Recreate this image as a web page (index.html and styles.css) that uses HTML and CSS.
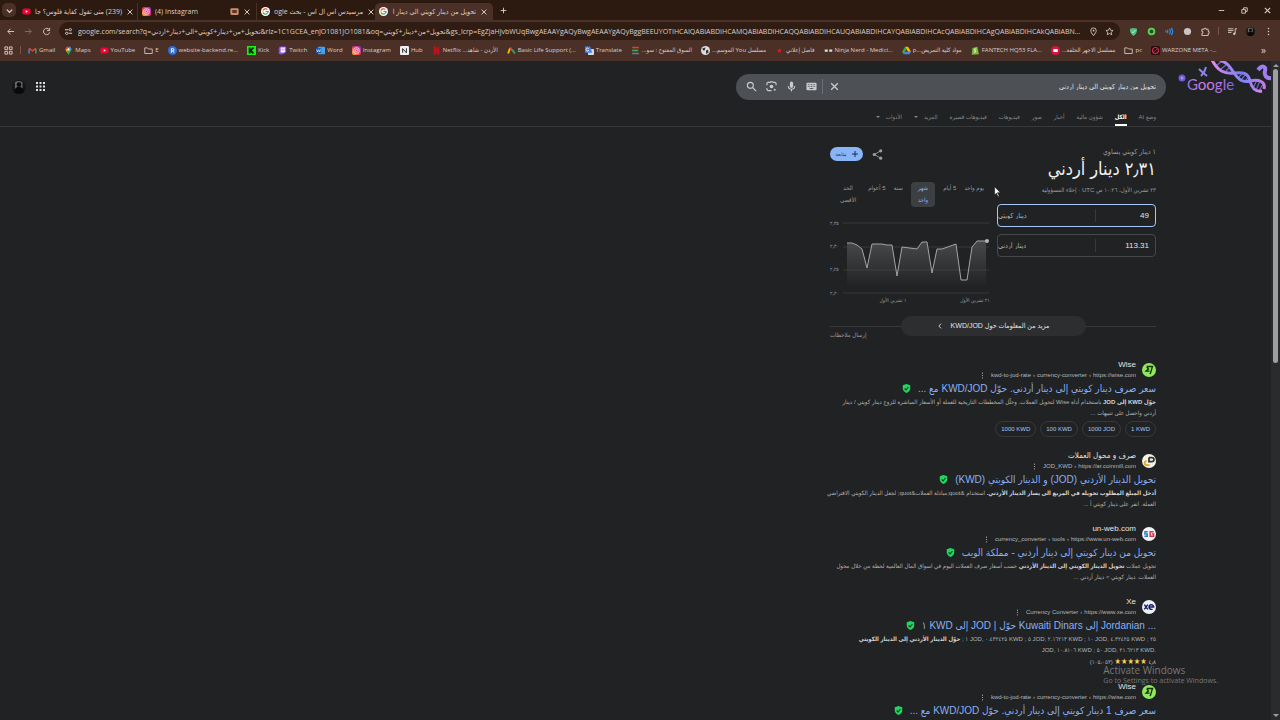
FILE: index.html
```html
<!DOCTYPE html>
<html lang="ar">
<head>
    <meta charset="UTF-8">
    <meta name="viewport" content="width=device-width, initial-scale=1.0">
    <title>تحويل من دينار كويتي الى دينار اردني - بحث Google</title>
    <link rel="stylesheet" href="styles.css">
</head>
<body>
    <svg class="sprite" aria-hidden="true">
        <symbol id="i-close" viewBox="0 0 10 10"><path d="M2 2l6 6M8 2l-6 6" fill="none" stroke="currentColor" stroke-width="1.2"/></symbol>
        <symbol id="i-youtube" viewBox="0 0 24 24"><rect x="1" y="4" width="22" height="16" rx="5" fill="#f00033"/><path d="M10 8.500l6 3.500-6 3.500z" fill="#fff"/></symbol>
        <symbol id="i-instagram" viewBox="0 0 24 24"><rect width="24" height="24" rx="6" fill="url(#insta)"/><rect x="5" y="5" width="14" height="14" rx="4" fill="none" stroke="#fff" stroke-width="2"/><circle cx="12" cy="12" r="3.200" fill="none" stroke="#fff" stroke-width="2"/><circle cx="16" cy="8" r="1" fill="#fff"/></symbol>
        <symbol id="i-google" viewBox="0 0 24 24"><circle cx="12" cy="12" r="12" fill="#fff"/><path d="M17 7a7 7 0 0 0-11.500 2" fill="none" stroke="#ea4335" stroke-width="3"/><path d="M5.500 9a7 7 0 0 0 0 6" fill="none" stroke="#fbbc05" stroke-width="3"/><path d="M5.500 15a7 7 0 0 0 11 2" fill="none" stroke="#34a853" stroke-width="3"/><path d="M16.500 17a7 7 0 0 0 2.500-5h-7" fill="none" stroke="#4285f4" stroke-width="3"/></symbol>
        <symbol id="i-folder" viewBox="0 0 24 24"><path d="M2 5h7l3 3h10v12H2z" fill="none" stroke="currentColor" stroke-width="2.200" stroke-linejoin="round"/></symbol>
        <symbol id="i-check" viewBox="0 0 24 24"><path d="M12 0l10 3v9c0 6-5 10-10 12-5-2-10-6-10-12V3z" fill="#1fd760"/><path d="M7 12l4 4 6-8" fill="none" stroke="#15301e" stroke-width="3"/></symbol>
        <symbol id="i-wise" viewBox="0 0 24 24"><circle cx="12" cy="12" r="12" fill="#8fe85e"/><path d="M8 6h10l-4 13M8 6l3 4-4 4h6" fill="none" stroke="#163300" stroke-width="2.400"/></symbol>
        <symbol id="i-dots" viewBox="0 0 4 12"><circle cx="2" cy="2" r="1"/><circle cx="2" cy="6" r="1"/><circle cx="2" cy="10" r="1"/></symbol>
        <symbol id="i-avatar" viewBox="0 0 24 24"><circle cx="12" cy="12" r="12" fill="#151617"/><path d="M5 4q6-5 13 0v12H5z" fill="#66686a"/><circle cx="12" cy="8" r="4" fill="#0a0a0b"/><path d="M4 22c0-7 2-10 8-10s9 4 8 9q-8 5-16 1z" fill="#0a0a0b"/></symbol>
        <linearGradient id="insta" x1="0" y1="1" x2="1" y2="0"><stop offset="0" stop-color="#fdc02f"/><stop offset="0.500" stop-color="#f0306b"/><stop offset="1" stop-color="#8a3ac8"/></linearGradient>
    </svg>

    <!-- Browser window -->
    <header class="browser" dir="ltr">
        <div class="tab-strip">
            <button class="tab-search" aria-label="Search tabs"><svg viewBox="0 0 10 10"><path d="M2 4l3 3 3-3" fill="none" stroke="currentColor" stroke-width="1.400"/></svg></button>
            <div class="tab">
                <svg class="fav"><use href="#i-youtube"/></svg>
                <span class="tab-title" dir="rtl">(239) متى تقول كفاية فلوس؟ جا</span>
                <button class="tab-close" aria-label="Close"><svg><use href="#i-close"/></svg></button>
            </div>
            <div class="tab divided">
                <svg class="fav"><use href="#i-instagram"/></svg>
                <span class="tab-title">(4) Instagram</span>
                <svg class="fav" viewBox="0 0 24 24"><rect x="1" y="3" width="22" height="18" rx="3" fill="#c98f68"/><rect x="6" y="8" width="12" height="8" fill="#5b3526"/></svg>
                <button class="tab-close" aria-label="Close"><svg><use href="#i-close"/></svg></button>
            </div>
            <div class="tab divided">
                <svg class="fav"><use href="#i-google"/></svg>
                <span class="tab-title" dir="rtl">مرسيدس اس ال اس - بحث ogle</span>
                <button class="tab-close" aria-label="Close"><svg><use href="#i-close"/></svg></button>
            </div>
            <div class="tab active">
                <svg class="fav"><use href="#i-google"/></svg>
                <span class="tab-title" dir="rtl">تحويل من دينار كويتي الى دينار ا</span>
                <button class="tab-close" aria-label="Close"><svg><use href="#i-close"/></svg></button>
            </div>
            <button class="new-tab" aria-label="New tab"><svg viewBox="0 0 10 10"><path d="M5 1v8M1 5h8" stroke="currentColor" stroke-width="1.300"/></svg></button>
            <div class="window-buttons">
                <button aria-label="Minimize"><svg viewBox="0 0 10 10"><path d="M2 5h6" stroke="currentColor"/></svg></button>
                <button aria-label="Restore"><svg viewBox="0 0 10 10"><path d="M2 4h4v4H2zM4 4V2h4v4H6" fill="none" stroke="currentColor"/></svg></button>
                <button aria-label="Close window"><svg><use href="#i-close"/></svg></button>
            </div>
        </div>

        <div class="toolbar">
            <button class="nav-btn" aria-label="Back"><svg viewBox="0 0 10 10"><path d="M9 5H2M5 2L2 5l3 3" fill="none" stroke="currentColor"/></svg></button>
            <button class="nav-btn off" aria-label="Forward"><svg viewBox="0 0 10 10"><path d="M1 5h7M5 2l3 3-3 3" fill="none" stroke="currentColor"/></svg></button>
            <button class="nav-btn" aria-label="Reload"><svg viewBox="0 0 10 10"><path d="M8 3a3.500 3.500 0 1 0 .5 3M8.500 1v3h-3" fill="none" stroke="currentColor"/></svg></button>
            <div class="address">
                <button class="site-info" aria-label="Site information"><svg viewBox="0 0 10 10"><path d="M1 3h4M5 7h4" stroke="currentColor" stroke-width="1.200"/><circle cx="7" cy="3" r="1.300" fill="none" stroke="currentColor"/><circle cx="3" cy="7" r="1.300" fill="none" stroke="currentColor"/></svg></button>
                <input type="text" aria-label="Address" value="google.com/search?q=تحويل+من+دينار+كويتي+الى+دينار+اردني&amp;rlz=1C1GCEA_enJO1081JO1081&amp;oq=تحويل+من+دينار+كويتي&amp;gs_lcrp=EgZjaHJvbWUqBwgAEAAYgAQyBwgAEAAYgAQyBggBEEUYOTIHCAIQABiABDIHCAMQABiABDIHCAQQABiABDIHCAUQABiABDIHCAYQABiABDIHCAcQABiABDIHCAgQABiABDIHCAkQABiABNIBCDExNjhqMGo3qAIAsAIA">
                <button aria-label="Location"><svg viewBox="0 0 10 10"><path d="M5 9.500C3 7 2 5.500 2 4a3 3 0 0 1 6 0c0 1.500-1 3-3 5.500z" fill="none" stroke="currentColor"/><circle cx="5" cy="4" r="1" fill="currentColor"/></svg></button>
                <button aria-label="Bookmark"><svg viewBox="0 0 10 10"><path d="M5 1l1.200 2.600 2.800.3-2.100 1.900.6 2.800L5 7.200 2.500 8.600l.6-2.800L1 3.900l2.800-.3z" fill="none" stroke="currentColor" stroke-width=".9"/></svg></button>
            </div>
            <button class="ext" aria-label="Shield"><svg viewBox="0 0 10 10"><path d="M5 1l4 1c0 4-1 6-4 8-3-2-4-4-4-8z" fill="#4fc07e"/><path d="M3 5l1.500 1.500L7 3.500" stroke="#d8f6e2" fill="none"/></svg></button>
            <button class="ext" aria-label="Extension"><svg viewBox="0 0 10 10"><circle cx="5" cy="5" r="3.200" fill="#1d5a22" stroke="#5ed45a" stroke-width="2"/></svg></button>
            <button class="ext" aria-label="Sound"><svg viewBox="0 0 10 10"><path d="M1 4v2M3 3v4M5 2q2 3 0 6M7 1q3 4 0 8" fill="none" stroke="#2d8ff0" stroke-width="1.300"/></svg></button>
            <button class="ext" aria-label="Extension"><svg viewBox="0 0 10 10"><circle cx="5" cy="5" r="4" fill="#c9c5c2"/></svg></button>
            <button class="ext" aria-label="Extensions"><svg viewBox="0 0 10 10"><path d="M1 2.500h2.500V1.500h2v1H8V5h1v2H8v2.500H1V7h1V5H1z" fill="none" stroke="currentColor"/></svg></button>
            <span class="bar-line"></span>
            <button class="ext" aria-label="Media"><svg viewBox="0 0 10 10"><path d="M0 2h6M0 4h6M0 6h4M8 7V2h2" fill="none" stroke="currentColor"/><circle cx="7" cy="7.500" r="1.300" fill="currentColor"/></svg></button>
            <button class="ext" aria-label="Profile"><svg class="profile"><use href="#i-avatar"/></svg></button>
            <button class="ext" aria-label="Menu"><svg fill="currentColor"><use href="#i-dots"/></svg></button>
        </div>

        <nav class="bookmarks">
            <button class="apps" aria-label="Apps"><svg class="fav" viewBox="0 0 10 10"><path d="M1 1h3v3H1zM6 1h3v3H6zM1 6h3v3H1zM6 6h3v3H6z" fill="none" stroke="currentColor"/></svg></button>
            <span class="bar-line"></span>
            <a href="#"><svg class="fav" viewBox="0 0 24 24"><path d="M3 20V7" stroke="#4285f4" stroke-width="4"/><path d="M3 6l9 7 9-7" fill="none" stroke="#ea4335" stroke-width="4"/><path d="M21 7v13" stroke="#34a853" stroke-width="4"/></svg><span>Gmail</span></a>
            <a href="#"><svg class="fav" viewBox="0 0 24 24"><path d="M12 24C7 16 4 13 4 8h16c0 5-3 8-8 16z" fill="#34a853"/><path d="M4 9a8 8 0 0 1 8-8v8z" fill="#ea4335"/><path d="M12 1a8 8 0 0 1 8 8h-8z" fill="#4285f4"/><path d="M4 9h8l-5 6z" fill="#fbbc05"/><circle cx="12" cy="9" r="3" fill="#fff"/></svg><span>Maps</span></a>
            <a href="#"><svg class="fav"><use href="#i-youtube"/></svg><span>YouTube</span></a>
            <a href="#"><svg class="fav"><use href="#i-folder"/></svg><span>E</span></a>
            <a href="#"><svg class="fav" viewBox="0 0 24 24"><circle cx="12" cy="12" r="12" fill="#2f6fdb"/><path d="M9 18V7h4a3 3 0 0 1 0 6H9m4 0l3 5" fill="none" stroke="#fff" stroke-width="2.500"/></svg><span>website-backend.re...</span></a>
            <a href="#"><svg class="fav" viewBox="0 0 24 24"><rect width="24" height="24" fill="#18f018"/><path d="M7 4v16M17 4l-7 8 7 8" fill="none" stroke="#0b1a08" stroke-width="5"/></svg><span>Kick</span></a>
            <a href="#"><svg class="fav" viewBox="0 0 24 24"><path d="M5 1h17v14l-6 6h-5l-4 3v-3H2V5z" fill="#9146ff"/><path d="M7 4h12v10l-3 3H7z" fill="#fff"/><path d="M11 7v5M16 7v5" stroke="#9146ff" stroke-width="2"/></svg><span>Twitch</span></a>
            <a href="#"><svg class="fav" viewBox="0 0 24 24"><rect x="5" y="2" width="19" height="20" rx="2" fill="#41a5ee"/><rect y="6" width="14" height="13" fill="#185abd"/><path d="M2 9l2 7 3-6 3 6 2-7" fill="none" stroke="#fff" stroke-width="1.600"/></svg><span>Word</span></a>
            <a href="#"><svg class="fav"><use href="#i-instagram"/></svg><span>Instagram</span></a>
            <a href="#"><svg class="fav" viewBox="0 0 24 24"><rect width="24" height="24" rx="3" fill="#eee"/><path d="M7 18V7l10 11V6" fill="none" stroke="#222" stroke-width="2.500"/></svg><span>Hub</span></a>
            <a href="#"><svg class="fav" viewBox="0 0 24 24"><path d="M7 1v22M17 1v22M7 1l10 22" stroke="#c4101c" stroke-width="5"/></svg><span dir="rtl">الأردن - شاهد... Netflix</span></a>
            <a href="#"><svg class="fav" viewBox="0 0 24 24"><path d="M3 20L8 6" stroke="#fbbc05" stroke-width="5"/><path d="M8 4l6 8" stroke="#ea4335" stroke-width="5"/><path d="M14 10l7 10" stroke="#34a853" stroke-width="5"/></svg><span>Basic Life Support (...</span></a>
            <a href="#"><svg class="fav" viewBox="0 0 24 24"><rect x="8" y="8" width="16" height="16" rx="2" fill="#d8dade"/><path d="M0 1h14l5 17H0z" fill="#4285f4"/><path d="M10 7a4 4 0 1 0 0 5H7" fill="none" stroke="#fff" stroke-width="2"/></svg><span>Translate</span></a>
            <a href="#"><svg class="fav" viewBox="0 0 24 24"><path d="M3 4h18" stroke="#d3433d" stroke-width="4"/><path d="M3 12h16" stroke="#46b04f" stroke-width="4"/><path d="M3 20h18" stroke="#3f88c9" stroke-width="4"/></svg><span dir="rtl">السوق المفتوح : سو...</span></a>
            <a href="#"><svg class="fav" viewBox="0 0 24 24"><circle cx="12" cy="12" r="12" fill="#ddd"/><path d="M4 6l8-2-2 7-5 1zM13 12l6-2 1 7-6 4z" fill="#333"/></svg><span dir="rtl">مسلسل You الموسم...</span></a>
            <a href="#"><svg class="fav" viewBox="0 0 24 24"><path d="M12 6l2 4 4 1-3 3 1 4-4-2-4 2 1-4-3-3 4-1z" fill="#d01f2b"/></svg><span dir="rtl">فاصل إعلاني</span></a>
            <a href="#"><svg class="fav" viewBox="0 0 24 24"><path d="M2 12h8M14 12h8" stroke="#ddd" stroke-width="6"/></svg><span>Ninja Nerd - Medici...</span></a>
            <a href="#"><svg class="fav" viewBox="0 0 24 24"><path d="M8 2h8l8 13h-8z" fill="#fbbc05"/><path d="M8 2l4 7-8 13-4-7z" fill="#34a853"/><path d="M8 15h16l-4 7H4z" fill="#4285f4"/></svg><span dir="rtl">مواد كلية التمريض...p</span></a>
            <a href="#"><svg class="fav" viewBox="0 0 24 24"><path d="M4 5l13-3 4 20-19 1z" fill="#7dba3e"/><path d="M14 8c-5-1-6 3-3 4s2 5-3 4" fill="none" stroke="#fff" stroke-width="2.500"/></svg><span>FANTECH HQ53 FLA...</span></a>
            <a href="#"><svg class="fav" viewBox="0 0 24 24"><circle cx="12" cy="12" r="12" fill="#d9153f"/><rect x="6" y="8" width="12" height="8" rx="2" fill="#fff"/></svg><span dir="rtl">مسلسل الاجهر الحلقة...</span></a>
            <a href="#"><svg class="fav"><use href="#i-folder"/></svg><span>pc</span></a>
            <a href="#"><svg class="fav" viewBox="0 0 24 24"><rect width="24" height="24" rx="5" fill="#26090e"/><circle cx="12" cy="12" r="8" fill="none" stroke="#d52b4b" stroke-width="3"/><path d="M7 17L17 7" stroke="#d52b4b" stroke-width="2"/></svg><span>WARZONE META -...</span></a>
            <button class="more-marks" aria-label="More bookmarks">»</button>
        </nav>
    </header>

    <div class="viewport">
        <div class="page" dir="rtl">
            <div class="top">
                <a class="logo" href="#" aria-label="Google">
                    <svg viewBox="0 0 93 38">
                        <defs>
                            <linearGradient id="dna-a" x1="0" x2="1"><stop offset="0" stop-color="#e58be8"/><stop offset="0.600" stop-color="#6f7df2"/><stop offset="1" stop-color="#dd86e6"/></linearGradient>
                            <linearGradient id="dna-b" x1="0" x2="1"><stop offset="0" stop-color="#c183ec"/><stop offset="0.500" stop-color="#7a86f5"/><stop offset="1" stop-color="#c77be8"/></linearGradient>
                            <linearGradient id="word" x1="0" x2="1"><stop offset="0" stop-color="#8e6fe8"/><stop offset="0.400" stop-color="#e07fe0"/><stop offset="1" stop-color="#7868e6"/></linearGradient>
                        </defs>
                        <circle cx="4" cy="17" r="3.500" fill="#6c5bd9"/><circle cx="4" cy="17" r="1.500" fill="#b18bf2"/>
                        <path d="M21 8q3 3 8 7M28 6q-1 5-5 9" fill="none" stroke="#8f83ef" stroke-width="2"/>
                        <text class="logo-word" x="9" y="29" fill="url(#word)">Google</text>
                        <path d="M38 5l6-5M42 9l7-6M47 11l5-5M60 17l5-5M63 19l5-6M67 20l4-5M75 27l4-8M78 29l4-9M81 30l4-7" stroke="#6c68d0" stroke-width="1.200"/>
                        <path d="M34-1C40 10 46 13 56 12s14 0 16 8 6 11 12 10" fill="none" stroke="url(#dna-a)" stroke-width="3"/>
                        <path d="M42-1c8 3 10 7 14 13s8 10 16 8 16 0 14 8" fill="none" stroke="url(#dna-b)" stroke-width="3"/>
                        <path d="M80 9c5-6 8-3 7 1s1 8 7 7" fill="none" stroke="#a07cf0" stroke-width="4"/>
                    </svg>
                </a>
                <form class="search" role="search">
                    <input type="text" aria-label="بحث" value="تحويل من دينار كويتي الى دينار اردني">
                    <button type="button" aria-label="محو"><svg><use href="#i-close"/></svg></button>
                    <span class="search-line"></span>
                    <button type="button" aria-label="لوحة المفاتيح"><svg viewBox="0 0 24 24"><rect x="1" y="4" width="22" height="16" rx="2" fill="currentColor"/><path d="M4 8h16M4 12h16" stroke="#4d5156" stroke-width="2" stroke-dasharray="2 1.500"/><path d="M8 16.500h8" stroke="#4d5156" stroke-width="2"/></svg></button>
                    <button type="button" aria-label="بحث صوتي"><svg viewBox="0 0 24 24"><rect x="8.500" y="1" width="7" height="14" rx="3.500" fill="currentColor"/><path d="M5 11a7 7 0 0 0 14 0M12 18v5" fill="none" stroke="currentColor" stroke-width="2.200"/></svg></button>
                    <button type="button" aria-label="بحث بالصور"><svg viewBox="0 0 24 24"><path d="M2 9V6q0-3 3-3h3l2-1h4l2 1h3q3 0 3 3v3M2 15v3q0 3 3 3h7" fill="none" stroke="currentColor" stroke-width="2.400"/><circle cx="12" cy="12" r="4" fill="currentColor"/><circle cx="19" cy="19" r="2.200" fill="currentColor"/></svg></button>
                    <button type="submit" aria-label="بحث"><svg viewBox="0 0 24 24"><circle cx="9.500" cy="9.500" r="6.500" fill="none" stroke="currentColor" stroke-width="2.400"/><path d="M14 14l8 8" stroke="currentColor" stroke-width="2.600"/></svg></button>
                </form>
                <div class="account">
                    <button aria-label="تطبيقات Google"><svg viewBox="0 0 9 9" fill="currentColor"><path d="M0 0h2v2H0zM3.500 0h2v2h-2zM7 0h2v2H7zM0 3.500h2v2H0zM3.500 3.500h2v2h-2zM7 3.500h2v2H7zM0 7h2v2H0zM3.500 7h2v2h-2zM7 7h2v2H7z"/></svg></button>
                    <button aria-label="الحساب"><svg class="face"><use href="#i-avatar"/></svg></button>
                </div>
            </div>

            <nav class="modes">
                <a href="#">وضع AI</a>
                <a href="#" class="current">الكل</a>
                <a href="#">شؤون مالية</a>
                <a href="#">أخبار</a>
                <a href="#">صور</a>
                <a href="#">فيديوهات</a>
                <a href="#">فيديوهات قصيرة</a>
                <a href="#" class="drop">المزيد</a>
                <a href="#" class="drop">الأدوات</a>
            </nav>

            <main class="content">
                <section class="currency">
                    <div class="currency-head">
                        <div>
                            <p class="equals">١ دينار كويتي يساوي</p>
                            <h1>٢٫٣١ دينار أردني</h1>
                            <p class="updated">٢٣ تشرين الأول، ١٠:٢٦ ص UTC · <a href="#">إخلاء المسؤولية</a></p>
                        </div>
                        <div class="currency-actions">
                            <button aria-label="مشاركة" class="share"><svg viewBox="0 0 24 24"><path d="M19 4L5 12l14 8" fill="none" stroke="currentColor" stroke-width="2"/><circle cx="19" cy="4" r="3.500" fill="currentColor"/><circle cx="5" cy="12" r="3.500" fill="currentColor"/><circle cx="19" cy="20" r="3.500" fill="currentColor"/></svg></button>
                            <button class="follow"><svg viewBox="0 0 10 10"><path d="M5 0v10M0 5h10" stroke="currentColor" stroke-width="1.600"/></svg>متابعة</button>
                        </div>
                    </div>

                    <div class="currency-body">
                        <div class="fields">
                            <div class="field focus">
                                <input type="text" value="49" aria-label="المبلغ بالدينار الكويتي">
                                <select aria-label="من"><option>دينار كويتي</option></select>
                            </div>
                            <div class="field">
                                <input type="text" value="113.31" aria-label="المبلغ بالدينار الأردني">
                                <select aria-label="إلى"><option>دينار أردني</option></select>
                            </div>
                        </div>
                        <div class="chart">
                            <div class="ranges">
                                <button>يوم واحد</button>
                                <button>5 أيام</button>
                                <button class="on">شهر واحد</button>
                                <button>سنة</button>
                                <button>5 أعوام</button>
                                <button>الحد الأقصى</button>
                            </div>
                            <svg class="graph" viewBox="0 0 160 90" direction="ltr">
                                <defs><linearGradient id="area" x1="0" x2="0" y1="0" y2="1"><stop offset="0" stop-color="#48494b"/><stop offset="1" stop-color="#48494b" stop-opacity="0"/></linearGradient></defs>
                                <path d="M13 8h146M13 32h146M13 55h146M13 78h146" stroke="#37393b"/>
                                <path d="M17 28l5 0 5 2 5 4 5 19 5-24h10l5 1h5l5 31 5-29 15 2 5-7h5l5 31 5-24h5l14-5 5 36h6l5-33 5-6h9V72H17z" fill="url(#area)"/>
                                <path d="M17 28l5 0 5 2 5 4 5 19 5-24h10l5 1h5l5 31 5-29 15 2 5-7h5l5 31 5-24h5l14-5 5 36h6l5-33 5-6h9" fill="none" stroke="#a2a4a6"/>
                                <circle cx="157" cy="26" r="2" fill="#b4b6b8"/>
                                <text x="0" y="10">٢٫٣٥</text>
                                <text x="0" y="33">٢٫٣٠</text>
                                <text x="0" y="56">٢٫٢٥</text>
                                <text x="0" y="80">٢٫٢٠</text>
                                <text x="63" y="87" text-anchor="middle">١ تشرين الأول</text>
                                <text x="145" y="87" text-anchor="middle">٢١ تشرين الأول</text>
                            </svg>
                        </div>
                    </div>

                    <div class="more-row"><a class="more-info" href="#"><span>مزيد من المعلومات حول KWD/JOD</span><svg viewBox="0 0 10 10"><path d="M7 1L3 5l4 4" fill="none" stroke="currentColor" stroke-width="1.400"/></svg></a></div>
                    <a class="feedback" href="#">إرسال ملاحظات</a>
                </section>

                <article class="result">
                    <div class="source">
                        <svg class="site-icon"><use href="#i-wise"/></svg>
                        <div>
                            <div class="site">Wise</div>
                            <cite><bdi>https://wise.com</bdi> › <bdi>currency-converter</bdi> › <bdi>kwd-to-jod-rate</bdi><button aria-label="المزيد"><svg fill="currentColor"><use href="#i-dots"/></svg></button></cite>
                        </div>
                    </div>
                    <h3><a href="#">سعر صرف دينار كويتي إلى دينار أردني. حوّل KWD/JOD مع ...</a><svg class="safe"><use href="#i-check"/></svg></h3>
                    <p><b>حوّل KWD إلى JOD</b> باستخدام أداة Wise لتحويل العملات. وحلّل المخططات التاريخية للعملة أو الأسعار المباشرة للزوج دينار كويتي / دينار<br>أردني واحصل على تنبيهات ...</p>
                    <div class="chips"><a href="#">1 KWD</a><a href="#">1000 JOD</a><a href="#">100 KWD</a><a href="#">1000 KWD</a></div>
                </article>

                <article class="result">
                    <div class="source">
                        <svg class="site-icon" viewBox="0 0 24 24"><circle cx="12" cy="12" r="12" fill="#f5f1e6"/><path d="M12 6h5a3 3 0 0 1 0 7h-5V6" fill="none" stroke="#333" stroke-width="3"/><path d="M13 19H8a3 3 0 0 1 0-7" fill="none" stroke="#e5a71e" stroke-width="3"/></svg>
                        <div>
                            <div class="site">صرف و محول العملات</div>
                            <cite><bdi>https://ar.coinmill.com</bdi> › <bdi>JOD_KWD</bdi><button aria-label="المزيد"><svg fill="currentColor"><use href="#i-dots"/></svg></button></cite>
                        </div>
                    </div>
                    <h3><a href="#">تحويل الدينار الأردني (JOD) و الدينار الكويتي (KWD)</a><svg class="safe"><use href="#i-check"/></svg></h3>
                    <p><b>أدخل المبلغ المطلوب تحويله في المربع الى يسار الدينار الأردني.</b> استخدام &amp;quot;مبادلة العملات&amp;quot; لجعل الدينار الكويتي الافتراضي<br>العملة. انقر على دينار كويتي أ ...</p>
                </article>

                <article class="result">
                    <div class="source">
                        <svg class="site-icon" viewBox="0 0 24 24"><circle cx="12" cy="12" r="12" fill="#f3f5fa"/><path d="M10 8H5v4h4v4H4" fill="none" stroke="#3c7bd4" stroke-width="2.500"/><path d="M20 8h-6v8h6v-4h-3" fill="none" stroke="#d13847" stroke-width="2.500"/></svg>
                        <div>
                            <div class="site">un-web.com</div>
                            <cite><bdi>https://www.un-web.com</bdi> › <bdi>tools</bdi> › <bdi>currency_converter</bdi><button aria-label="المزيد"><svg fill="currentColor"><use href="#i-dots"/></svg></button></cite>
                        </div>
                    </div>
                    <h3><a href="#">تحويل من دينار كويتي إلى دينار أردني - مملكة الويب</a><svg class="safe"><use href="#i-check"/></svg></h3>
                    <p>تحويل عملات <b>تحويل الدينار الكويتي إلى الدينار الأردني</b> حسب أسعار صرف العملات اليوم في اسواق المال العالمية لحظة من خلال محول<br>العملات. دينار كويتي &gt; دينار أردني ...</p>
                </article>

                <article class="result">
                    <div class="source">
                        <svg class="site-icon" viewBox="0 0 24 24"><circle cx="12" cy="12" r="12" fill="#eef0f8"/><path d="M4 8l6 8M10 8l-6 8M12 12h8a4 4 0 1 0-2 3.500" fill="none" stroke="#191d6b" stroke-width="2.500"/></svg>
                        <div>
                            <div class="site">Xe</div>
                            <cite><bdi>https://www.xe.com</bdi> › <bdi>Currency Converter</bdi><button aria-label="المزيد"><svg fill="currentColor"><use href="#i-dots"/></svg></button></cite>
                        </div>
                    </div>
                    <h3><a href="#" dir="ltr">١ KWD إلى JOD | حوّل Kuwaiti Dinars إلى Jordanian ...</a><svg class="safe"><use href="#i-check"/></svg></h3>
                    <p class="rates" dir="ltr"><bdi><b>حوّل الدينار الأردني إلى الدينار الكويتي</b></bdi> ; ١ JOD, ٠.٤٣٢٤٢٥ KWD ; ٥ JOD, ٢.١٦٢١٣ KWD ; ١٠ JOD, ٤.٣٢٤٢٥ KWD ; ٢٥<br>JOD, ١٠.٨١٠٦ KWD ; ٥٠ JOD, ٢١.٦٢١٣ KWD.</p>
                    <p class="rating">٤٫٨ <span class="stars">★★★★★</span> (١٠٥،٠٥٣)</p>
                </article>

                <article class="result">
                    <div class="source">
                        <svg class="site-icon"><use href="#i-wise"/></svg>
                        <div>
                            <div class="site">Wise</div>
                            <cite><bdi>https://wise.com</bdi> › <bdi>currency-converter</bdi> › <bdi>kwd-to-jod-rate</bdi><button aria-label="المزيد"><svg fill="currentColor"><use href="#i-dots"/></svg></button></cite>
                        </div>
                    </div>
                    <h3><a href="#">سعر صرف 1 دينار كويتي إلى دينار أردني. حوّل KWD/JOD مع ...</a><svg class="safe"><use href="#i-check"/></svg></h3>
                </article>
            </main>
        </div>
        <div class="scrollbar"><span class="arrow up"></span><span class="thumb"></span><span class="arrow down"></span></div>
    </div>

    <div class="watermark" dir="ltr"><strong>Activate Windows</strong><span>Go to Settings to activate Windows.</span></div>
    <svg class="cursor" viewBox="0 0 12 18"><path d="M1 1v14l3-3 3 6 2-1-3-6h5z" fill="#fff" stroke="#111"/></svg>
</body>
</html>
```
FILE: styles.css
```css
:root {
    --frame: #2c1a10;
    --toolbar: #4b3027;
    --field: #2f1c13;
    --page: #202223;
    --text: #e3e4e6;
    --muted: #9c9fa2;
    --link: #8ab0f2;
    --line: #37393b;
}

* {
    margin: 0;
    padding: 0;
    box-sizing: border-box;
}

body {
    height: 100vh;
    display: flex;
    flex-direction: column;
    overflow: hidden;
    background-color: var(--page);
    color: var(--text);
    font-family: "Liberation Sans", "DejaVu Sans Condensed", "DejaVu Sans", sans-serif;
}

button,
input,
select {
    border: none;
    background: none;
    color: inherit;
    font: inherit;
    outline: none;
}

button {
    display: flex;
    align-items: center;
    justify-content: center;
    flex-shrink: 0;
}

a {
    color: inherit;
    text-decoration: none;
}

.sprite {
    position: absolute;
    width: 0;
    height: 0;
}

/* Browser */
.browser {
    flex-shrink: 0;
    background-color: var(--toolbar);
    color: #dccfc8;
    font-family: "Open Sans", "DejaVu Sans Condensed", "DejaVu Sans", sans-serif;
    font-size: 7px;
}

.browser svg {
    width: 9px;
    height: 9px;
    flex-shrink: 0;
}

.tab-strip {
    display: flex;
    align-items: center;
    height: 20px;
    padding-left: 2px;
    background-color: var(--frame);
}

.tab-search {
    width: 14px;
    height: 14px;
    margin-right: 2px;
    border-radius: 5px;
    background-color: var(--toolbar);
}

.tab {
    display: flex;
    align-items: center;
    gap: 4px;
    width: 119px;
    height: 17px;
    padding: 0 5px 0 4px;
    align-self: flex-end;
}

.tab.divided {
    border-left: 1px solid #4b3027;
}

.tab.active {
    width: 118px;
    background-color: var(--toolbar);
    border-radius: 5px 5px 0 0;
}

.tab-title {
    flex: 1;
    white-space: nowrap;
}

.tab-close svg {
    width: 8px;
    height: 8px;
}

.new-tab {
    width: 20px;
}

.new-tab svg {
    width: 7px;
    height: 7px;
}

.window-buttons {
    display: flex;
    margin-left: auto;
    margin-right: 1px;
}

.window-buttons button {
    width: 23px;
}

.toolbar {
    display: flex;
    align-items: center;
    height: 22px;
    padding: 0 3px 0 1px;
}

.nav-btn,
.ext {
    width: 18px;
}

.nav-btn.off {
    opacity: 0.4;
}

.address {
    flex: 1;
    display: flex;
    align-items: center;
    height: 18px;
    margin: 0 4px;
    padding: 0 3px;
    border-radius: 9px;
    background-color: var(--field);
}

.address input {
    flex: 1;
    min-width: 0;
    margin: 0 4px;
    text-overflow: ellipsis;
}

.address button {
    width: 16px;
}

.address .site-info {
    width: 12px;
}

.bar-line {
    width: 1px;
    height: 8px;
    margin: 0 4px;
    background-color: #775447;
}

.bookmarks {
    display: flex;
    align-items: center;
    gap: 9px;
    height: 19px;
    padding: 0 14px 3px 4px;
    font-size: 6px;
}

.bookmarks a {
    display: flex;
    align-items: center;
    gap: 2px;
}

.bookmarks a span {
    white-space: nowrap;
}

.bookmarks .bar-line {
    margin: 0 -2px;
}

.more-marks {
    margin-left: auto;
    font-size: 10px;
}

/* Search page */
.viewport {
    flex: 1;
    display: flex;
    min-height: 0;
}

.page {
    flex: 1;
    overflow: hidden;
}

.top {
    display: flex;
    height: 51px;
    align-items: center;
}

.logo {
    width: 93px;
    align-self: flex-start;
}

.logo svg {
    display: block;
    width: 93px;
    height: 38px;
}

.logo-word {
    direction: ltr;
    font-family: Lato, sans-serif;
    font-size: 15px;
}

.search {
    display: flex;
    align-items: center;
    width: 430px;
    height: 26px;
    margin-right: 12px;
    padding: 0 10px 0 5px;
    border-radius: 13px;
    background-color: #4d5156;
}

.search input {
    flex: 1;
    min-width: 0;
    font-size: 7px;
}

.search button {
    width: 20px;
    color: #c9cccf;
}

.search svg {
    width: 11px;
    height: 11px;
}

.search-line {
    width: 1px;
    height: 15px;
    margin: 0 1px;
    background-color: #6b6f75;
}

.account {
    display: flex;
    align-items: center;
    gap: 10px;
    margin-right: auto;
    padding-left: 12px;
}

.account svg {
    width: 9px;
    height: 9px;
}

.account .face {
    width: 14px;
    height: 16px;
}

.modes {
    display: flex;
    gap: 12px;
    height: 15px;
    padding-right: 115px;
    border-bottom: 1px solid var(--line);
    color: #85888b;
    font-size: 6px;
    line-height: 10px;
}

.modes .current {
    border-bottom: 2px solid #fff;
    color: #fff;
    font-weight: bold;
}

.drop::after {
    content: "";
    display: inline-block;
    margin-right: 6px;
    border: 2px solid transparent;
    border-top-color: currentColor;
    border-bottom: none;
    vertical-align: middle;
}

.content {
    width: 441px;
    padding-right: 115px;
}

/* Currency box */
.currency {
    display: flow-root;
    padding: 20px 0 6px;
}

.currency-head {
    display: flex;
    justify-content: space-between;
    color: var(--muted);
}

.equals {
    font-size: 7px;
    line-height: 10px;
}

.currency h1 {
    color: #f0f1f2;
    font-size: 18px;
    font-weight: normal;
    line-height: 25px;
}

.updated {
    padding-top: 2px;
    font-size: 6px;
    line-height: 12px;
    white-space: nowrap;
}

.currency-actions {
    display: flex;
    align-items: flex-start;
    gap: 9px;
}

.share svg {
    width: 11px;
    height: 15px;
}

.follow {
    gap: 5px;
    width: 33px;
    height: 14px;
    border-radius: 7px;
    background-color: #8ab4f8;
    color: #12284d;
    font-size: 5px;
}

.follow svg {
    width: 6px;
    height: 6px;
}

.currency-body {
    display: flex;
    justify-content: space-between;
}

.fields {
    display: flex;
    flex-direction: column;
    gap: 7px;
    width: 159px;
    padding-top: 8px;
}

.field {
    display: flex;
    align-items: center;
    height: 23px;
    border: 1px solid #46494b;
    border-radius: 4px;
    font-size: 8px;
}

.field.focus {
    border-color: #a9c5f5;
}

.field input {
    width: 60px;
    height: 13px;
    padding-right: 6px;
    border-left: 1px solid var(--line);
}

.field select {
    flex: 1;
    min-width: 0;
    appearance: none;
    font-size: 7px;
    direction: ltr;
    color: #b5b8bb;
}

.chart {
    width: 160px;
    margin-top: -14px;
}

.ranges {
    display: flex;
    justify-content: space-between;
    height: 33px;
    padding: 0 6px;
    color: var(--muted);
    font-size: 6px;
    line-height: 12px;
}

.ranges button {
    align-items: flex-start;
    max-width: 24px;
}

.ranges .on {
    width: 24px;
    height: 25px;
    padding: 0 5px;
    border-radius: 4px;
    background-color: #3c4043;
    color: var(--link);
}

.graph {
    display: block;
    width: 160px;
    height: 90px;
    overflow: visible;
}

.graph text {
    direction: ltr;
    fill: var(--muted);
    font-size: 5px;
}

.more-row {
    display: flex;
    align-items: center;
    margin-top: 11px;
}

.more-row::before,
.more-row::after {
    content: "";
    flex: 1;
    height: 1px;
    background-color: var(--line);
}

.more-info {
    display: flex;
    align-items: center;
    justify-content: center;
    gap: 8px;
    width: 185px;
    height: 20px;
    border-radius: 10px;
    background-color: #2c2e30;
    font-size: 7px;
}

.more-info svg {
    width: 6px;
    height: 6px;
}

.feedback {
    display: block;
    margin-top: -6px;
    color: var(--muted);
    font-size: 6px;
    line-height: 10px;
    text-align: left;
}

/* Results */
.result {
    padding-top: 14px;
}

.source {
    display: flex;
    align-items: center;
    gap: 6px;
    height: 20px;
}

.site-icon {
    width: 14px;
    height: 14px;
}

.site {
    font-size: 8px;
    line-height: 10px;
}

.source cite {
    display: flex;
    align-items: center;
    gap: 2px;
    height: 10px;
    color: #b5b8bb;
    font-size: 6px;
    font-style: normal;
}

.source button {
    margin-right: 5px;
}

.source button svg {
    width: 3px;
    height: 7px;
}

.result h3 {
    display: flex;
    align-items: center;
    gap: 7px;
    height: 17px;
    color: var(--link);
    font-size: 10px;
    font-weight: normal;
    white-space: nowrap;
}

.safe {
    width: 9px;
    height: 9px;
}

.result p {
    color: #b2b5b8;
    font-size: 6px;
    line-height: 11px;
    white-space: nowrap;
}

.result b {
    color: #d3d5d8;
}

.result .rates {
    text-align: right;
}

.rating .stars {
    color: #f8cf57;
    font-size: 8px;
}

.chips {
    display: flex;
    gap: 4px;
    padding-top: 2px;
}

.chips a {
    direction: ltr;
    height: 16px;
    padding: 0 5px;
    border: 1px solid #37393b;
    border-radius: 8px;
    color: #a9c5f5;
    font-size: 6px;
    line-height: 14px;
}

/* Scrollbar */
.scrollbar {
    display: flex;
    flex-direction: column;
    align-items: center;
    width: 9px;
    padding: 3px 0;
    background-color: #2a2b2c;
}

.thumb {
    width: 5px;
    height: 45%;
    margin-top: 2px;
    border-radius: 3px;
    background-color: #9d9fa1;
}

.arrow {
    border: 3px solid transparent;
}

.arrow.up {
    border-top: none;
    border-bottom-color: #9d9fa1;
}

.arrow.down {
    margin-top: auto;
    border-bottom: none;
    border-top-color: #9d9fa1;
}

/* Desktop overlays */
.watermark {
    position: absolute;
    right: 62px;
    bottom: 34px;
    display: flex;
    flex-direction: column;
    color: #77797b;
    font-family: "Open Sans", sans-serif;
    font-size: 7px;
    line-height: 10px;
}

.watermark strong {
    font-size: 10px;
    font-weight: normal;
    line-height: 12px;
}

.cursor {
    position: absolute;
    left: 994px;
    top: 186px;
    width: 7px;
    height: 11px;
}
```
